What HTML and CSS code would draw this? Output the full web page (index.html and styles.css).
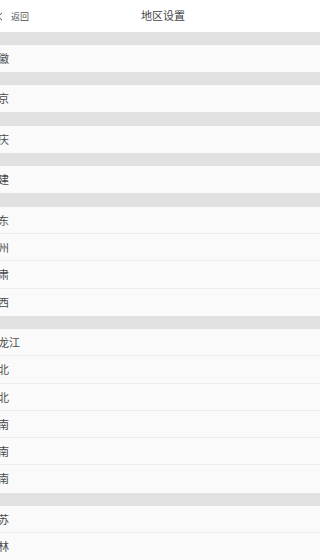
FILE: index.html
```html
<!DOCTYPE html>
<html lang="zh-CN">
<head>
<meta charset="utf-8">
<title>地区设置</title>
<link rel="stylesheet" href="styles.css">
</head>
<body>
<div class="page">
  <header class="topbar">
    <a class="back">
      <svg class="chev" width="6" height="9" viewBox="0 0 6 9"><path d="M5 0.8 L1.2 4.5 L5 8.2" fill="none" stroke="#555" stroke-width="1"/></svg>
      <span class="back-text">返回</span>
    </a>
    <h1 class="title">地区设置</h1>
  </header>

  <section class="group"><div class="band"></div>
    <ul class="list"><li>安徽</li></ul></section>
  <section class="group"><div class="band"></div>
    <ul class="list"><li>北京</li></ul></section>
  <section class="group"><div class="band"></div>
    <ul class="list"><li>重庆</li></ul></section>
  <section class="group"><div class="band"></div>
    <ul class="list"><li>福建</li></ul></section>
  <section class="group"><div class="band"></div>
    <ul class="list"><li>广东</li><li>贵州</li><li>甘肃</li><li>广西</li></ul></section>
  <section class="group"><div class="band"></div>
    <ul class="list"><li>黑龙江</li><li>河北</li><li>湖北</li><li>河南</li><li>湖南</li><li>海南</li></ul></section>
  <section class="group"><div class="band"></div>
    <ul class="list"><li>江苏</li><li>吉林</li><li>江西</li></ul></section>
</div>
</body>
</html>
```
FILE: styles.css
```css
html, body {
  margin: 0;
  padding: 0;
  background: #fafafa;
}
body {
  font-family: "Noto Sans CJK SC", "Noto Sans", sans-serif;
  color: #4a4a4a;
  overflow: hidden;
}
.page {
  width: 320px;
  overflow: hidden;
}
.topbar {
  height: 31.5px;
  background: #ffffff;
  display: flex;
  align-items: center;
  position: relative;
}
.back {
  display: flex;
  align-items: center;
  margin-left: -3px;
  padding-top: 1px;
}
.chev {
  display: block;
}
.back-text {
  font-size: 9px;
  margin-left: 8px;
  color: #555;
}
.title {
  margin: 0;
  position: absolute;
  left: 6px;
  right: 0;
  top: 0;
  height: 31px;
  line-height: 31px;
  text-align: center;
  font-size: 11px;
  font-weight: normal;
  color: #444;
}
.band {
  height: 13.2px;
  background: #e1e1e1;
}
.list {
  list-style: none;
  margin: 0;
  padding: 0;
  background: #fafafa;
}
.list li {
  box-sizing: border-box;
  height: 27.3px;
  line-height: 27px;
  font-size: 11px;
  text-indent: -13px;
  border-bottom: 1px solid #eeeeee;
  white-space: nowrap;
}
.list li:last-child {
  border-bottom: none;
}
```
